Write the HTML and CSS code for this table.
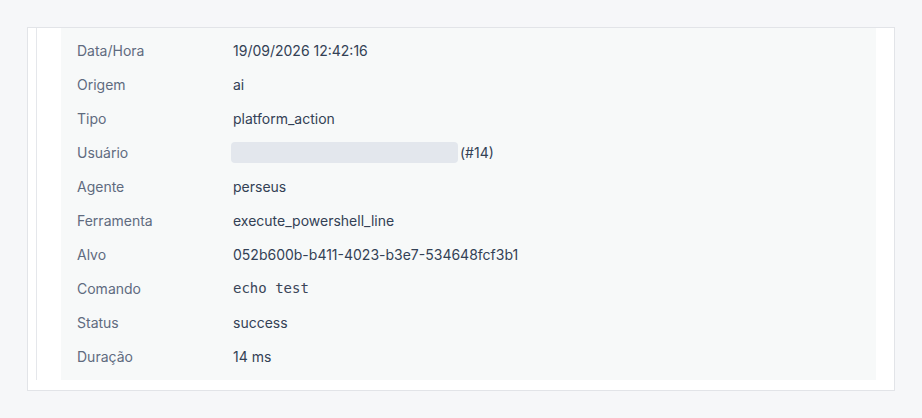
FILE: index.html
```html
<!DOCTYPE html>
<html lang="pt-BR">
<head>
  <meta charset="UTF-8">
  <meta name="viewport" content="width=device-width, initial-scale=1.0">
  <title>Detalhes do evento</title>
  <link rel="stylesheet" href="styles.css">
</head>
<body>
  <div class="card">
    <div class="detail">
      <div class="panel">
        <div class="row"><span class="label">Data/Hora</span><span class="value">19/09/2026 12:42:16</span></div>
        <div class="row"><span class="label">Origem</span><span class="value">ai</span></div>
        <div class="row"><span class="label">Tipo</span><span class="value">platform_action</span></div>
        <div class="row"><span class="label">Usuário</span><span class="value"><span class="redacted"></span>(#14)</span></div>
        <div class="row"><span class="label">Agente</span><span class="value">perseus</span></div>
        <div class="row"><span class="label">Ferramenta</span><span class="value">execute_powershell_line</span></div>
        <div class="row"><span class="label">Alvo</span><span class="value">052b600b-b411-4023-b3e7-534648fcf3b1</span></div>
        <div class="row"><span class="label">Comando</span><span class="value"><code>echo test</code></span></div>
        <div class="row"><span class="label">Status</span><span class="value">success</span></div>
        <div class="row"><span class="label">Duração</span><span class="value">14 ms</span></div>
      </div>
    </div>
  </div>
</body>
</html>
```

FILE: styles.css
```css
* {
  box-sizing: border-box;
}
body {
  font-family: Inter, 'Noto Sans', sans-serif;
  background: #f6f7f9;
  margin: 0;
  padding: 27px 28px 27px 27px;
}
.card {
  width: 868px;
  background: #fff;
  border: 1px solid #e2e4e8;
  padding: 0 18px 10px 8px;
}
.detail {
  border-left: 1px solid #e5e7eb;
  padding-left: 24px;
}
.panel {
  background: #f7f9f9;
  padding: 5px 16px 7px;
}
.row {
  display: flex;
  align-items: center;
  height: 34px;
  font-size: 14px;
}
.label {
  width: 156px;
  color: #5f6b7f;
}
.value {
  display: flex;
  align-items: center;
  color: #334155;
}
.redacted {
  display: inline-block;
  width: 227px;
  height: 21px;
  margin-left: -2px;
  margin-right: 2px;
  border-radius: 4px;
  background: #e3e7ed;
}
code {
  font-family: 'DejaVu Sans Mono', monospace;
  font-size: 14px;
  color: #3a4558;
}
```
